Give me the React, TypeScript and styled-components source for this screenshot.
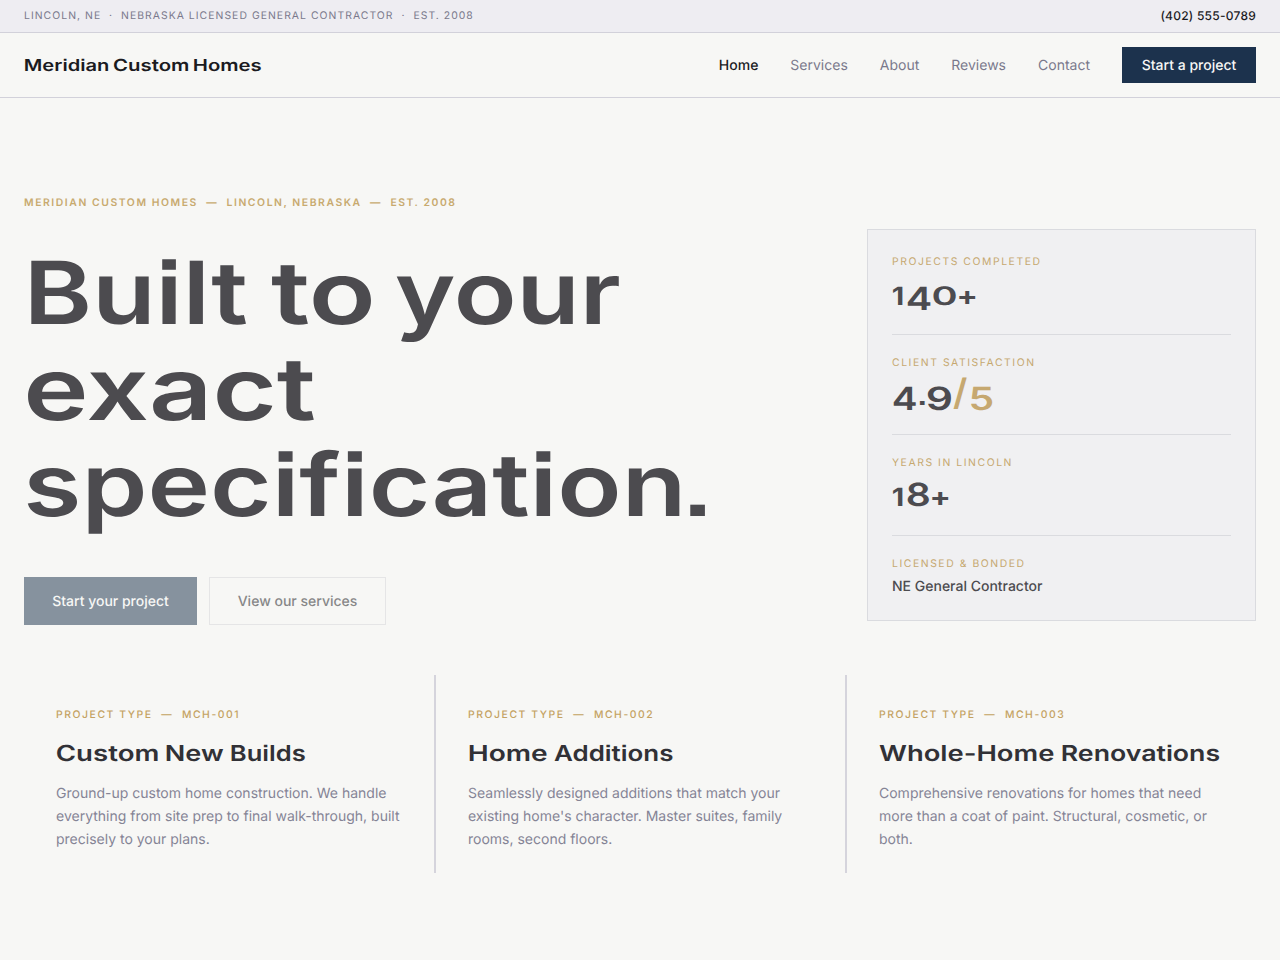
import React, { useLayoutEffect, useRef } from "react";
import styled, { createGlobalStyle } from "styled-components";

const GlobalStyle = createGlobalStyle`
  * { box-sizing: border-box; }
  body {
    margin: 0;
    min-height: 100vh;
    background: #f7f7f5;
    color: #1b1b1f;
    font-family: Inter, "Liberation Sans", sans-serif;
    text-rendering: geometricPrecision;
    overflow: hidden;
  }
  h1, h2, p { margin: 0; }
  a { color: inherit; text-decoration: none; }
`;

/* Display type: extended lettering, each word stretched to its set width. */
const WordBox = styled.span<{ $width: number; $gap: number; $size: number; $weight: number; $face: string }>`
  flex: none;
  display: inline-block;
  width: ${(p) => p.$width}px;
  margin-left: ${(p) => p.$gap}px;
  font-family: ${(p) => p.$face}, "Liberation Sans", sans-serif;
  font-size: ${(p) => p.$size}px;
  font-weight: ${(p) => p.$weight};
  font-feature-settings: "ss07" 1;
  white-space: nowrap;
`;
const WordInk = styled.span`
  display: inline-block;
  transform-origin: 0 50%;
`;
/* Last letter of a word that a punctuation mark follows closely. */
const LastLetter = styled.span<{ $trim: number }>`
  letter-spacing: -${(p) => p.$trim}px;
`;

type WordProps = {
  text: string;
  width: number;
  size: number;
  gap?: number;
  drop?: number;
  weight?: number;
  face?: string;
  trim?: number;
};

function Word({ text, width, size, gap = 0, drop = 0, weight = 600, face = "Inter", trim = 0 }: WordProps) {
  const ref = useRef<HTMLSpanElement>(null);
  useLayoutEffect(() => {
    const ctx = document.createElement("canvas").getContext("2d");
    if (!ctx || !ref.current) return;
    ctx.font = `${weight} ${size}px ${face}, "Liberation Sans", sans-serif`;
    const m = ctx.measureText(text);
    const scale = width / (m.actualBoundingBoxLeft + m.actualBoundingBoxRight);
    ref.current.style.transform = `translate(${m.actualBoundingBoxLeft * scale}px, ${drop}px) scaleX(${scale})`;
  }, [text, width, size, drop, weight, face]);
  return (
    <WordBox $width={width} $gap={gap} $size={size} $weight={weight} $face={face}>
      <WordInk ref={ref}>
        {trim ? (
          <>
            {text.slice(0, -1)}
            <LastLetter $trim={trim}>{text.slice(-1)}</LastLetter>
          </>
        ) : (
          text
        )}
      </WordInk>
    </WordBox>
  );
}

const TopBar = styled.div`
  height: 33px;
  padding: 0 24px 2px;
  display: flex;
  align-items: center;
  justify-content: space-between;
  background: #eeedf2;
  border-bottom: 1px solid #d2d1da;
`;
const TopNote = styled.span`
  font-size: 10.4px;
  letter-spacing: 1.04px;
  color: #7a798c;
  white-space: pre;
`;
const Phone = styled.a`
  font-size: 12px;
  font-weight: 500;
  letter-spacing: 0.24px;
`;

const Header = styled.header`
  height: 65px;
  padding: 0 24px;
  display: flex;
  align-items: center;
  justify-content: space-between;
  border-bottom: 1px solid #d2d1da;
`;
const Logo = styled.a`
  display: flex;
  align-items: baseline;
  padding-left: 1px;
  line-height: 24px;
`;
const Nav = styled.nav`
  display: flex;
  align-items: center;
  gap: 32px;
`;
const NavLink = styled.a<{ $active?: boolean }>`
  padding-top: 2px;
  font-size: 14px;
  line-height: 18px;
  font-weight: ${(p) => (p.$active ? 500 : 400)};
  color: ${(p) => (p.$active ? "#1b1b1f" : "#7a798c")};
`;
const NavButton = styled.a`
  width: 134px;
  height: 36px;
  padding-top: 2px;
  display: flex;
  align-items: center;
  justify-content: center;
  background: #1c324d;
  color: #f7f7f5;
  font-size: 14px;
  line-height: 18px;
  font-weight: 500;
`;

const Hero = styled.section`
  padding: 98px 24px 0;
  display: grid;
  grid-template-columns: 1fr 389px;
`;
const Eyebrow = styled.p`
  font-size: 10.4px;
  line-height: 14px;
  font-weight: 600;
  letter-spacing: 1.56px;
  color: #c8aa6f;
  white-space: pre;
`;
const Headline = styled.h1`
  margin-top: 35px;
  color: #4c4b4f;
  line-height: 96px;
`;
const HeadlineRow = styled.span<{ $inset: number }>`
  display: flex;
  align-items: baseline;
  height: 96px;
  padding-left: ${(p) => p.$inset}px;
`;
const Actions = styled.div`
  margin-top: 44px;
  display: flex;
  gap: 12px;
`;
const Action = styled.a<{ $primary?: boolean }>`
  width: ${(p) => (p.$primary ? 173 : 177)}px;
  height: 48px;
  padding-top: 2px;
  display: flex;
  align-items: center;
  justify-content: center;
  font-size: 14px;
  line-height: 18px;
  font-weight: 500;
  border: 1px solid ${(p) => (p.$primary ? "#86929e" : "#e5e5e6")};
  background: ${(p) => (p.$primary ? "#86929e" : "transparent")};
  color: ${(p) => (p.$primary ? "#f7f7f5" : "#878788")};
`;

const StatsPanel = styled.aside`
  margin-top: 33px;
  height: 392px;
  padding: 4px 24px 0;
  background: #f0f0f2;
  border: 1px solid #dadbdf;
`;
const Stat = styled.div<{ $height: number }>`
  height: ${(p) => p.$height}px;
  padding-top: 21px;
  border-bottom: 1px solid #dadbdf;
  &:last-child { border-bottom: 0; }
`;
const StatLabel = styled.p`
  font-size: 10.4px;
  line-height: 14px;
  letter-spacing: 1.56px;
  color: #c6a870;
`;
const StatValue = styled.p<{ $inset: number }>`
  display: flex;
  align-items: baseline;
  height: 40px;
  padding-left: ${(p) => p.$inset}px;
  margin-top: 5px;
  font-size: 32px;
  line-height: 40px;
  color: #4c4b4f;
`;
const Accent = styled.span`
  display: flex;
  align-items: baseline;
  color: #c6a870;
`;
const StatNote = styled.p`
  margin-top: 6px;
  font-size: 14px;
  line-height: 20px;
  font-weight: 500;
  color: #4c4b4f;
`;

const Services = styled.section`
  margin: 50px 24px 0;
  display: grid;
  grid-template-columns: 410px 411px 411px;
`;
const ServiceCard = styled.article`
  height: 198px;
  padding: 33px 32px 0;
  & + & { border-left: 2px solid #d5d4dc; }
`;
const ServiceTag = styled(Eyebrow)`
  font-weight: 500;
  color: #c4a262;
`;
const ServiceTitle = styled.h2`
  display: flex;
  align-items: baseline;
  height: 28px;
  margin-top: 18px;
  padding-left: 1px;
  line-height: 28px;
  color: #313136;
`;
const ServiceText = styled.p`
  margin-top: 14px;
  font-size: 14px;
  line-height: 23px;
  color: #858495;
  white-space: pre;
`;

const services = [
  {
    tag: "MCH-001",
    title: [
      { text: "Custom", width: 101.3 },
      { text: "New", width: 57, gap: 7.4 },
      { text: "Builds", width: 74.6, gap: 8 },
    ],
    lines: [
      "Ground-up custom home construction. We handle",
      "everything from site prep to final walk-through, built",
      "precisely to your plans.",
    ],
  },
  {
    tag: "MCH-002",
    title: [
      { text: "Home", width: 78.7 },
      { text: "Additions", width: 119.3, gap: 6.3 },
    ],
    lines: [
      "Seamlessly designed additions that match your",
      "existing home's character. Master suites, family",
      "rooms, second floors.",
    ],
  },
  {
    tag: "MCH-003",
    title: [
      { text: "Whole-Home", width: 175.3, gap: -0.8 },
      { text: "Renovations", width: 158, gap: 7.5 },
    ],
    lines: [
      "Comprehensive renovations for homes that need",
      "more than a coat of paint. Structural, cosmetic, or",
      "both.",
    ],
  },
];

export default function App() {
  return (
    <>
      <GlobalStyle />
      <TopBar>
        <TopNote>{"LINCOLN, NE \u00a0·\u00a0 NEBRASKA LICENSED GENERAL CONTRACTOR \u00a0·\u00a0 EST. 2008"}</TopNote>
        <Phone href="#">(402) 555-0789</Phone>
      </TopBar>
      <Header>
        <Logo href="#">
          <Word text="Meridian" size={16.5} width={83} />{" "}
          <Word text="Custom" size={16.5} width={75.3} gap={5} />{" "}
          <Word text="Homes" size={16.5} width={67.7} gap={5.7} />
        </Logo>
        <Nav>
          <NavLink href="#" $active>Home</NavLink>
          <NavLink href="#">Services</NavLink>
          <NavLink href="#">About</NavLink>
          <NavLink href="#">Reviews</NavLink>
          <NavLink href="#">Contact</NavLink>
          <NavButton href="#">Start a project</NavButton>
        </Nav>
      </Header>
      <main>
        <Hero>
          <div>
            <Eyebrow>{"MERIDIAN CUSTOM HOMES \u00a0—\u00a0 LINCOLN, NEBRASKA \u00a0—\u00a0 EST. 2008"}</Eyebrow>
            <Headline>
              <HeadlineRow $inset={7}>
                <Word text="Built" size={87} width={216} />{" "}
                <Word text="to" size={87} width={101} gap={24} />{" "}
                <Word text="your" size={87} width={223} gap={24} />
              </HeadlineRow>{" "}
              <HeadlineRow $inset={3}>
                <Word text="exact" size={87} width={288} />
              </HeadlineRow>{" "}
              <HeadlineRow $inset={3.4}>
                <Word text="specification" size={87} width={653} trim={7} />
                <Word text="." size={76} width={15} gap={10} weight={700} face="Liberation Sans" />
              </HeadlineRow>
            </Headline>
            <Actions>
              <Action href="#" $primary>Start your project</Action>
              <Action href="#">View our services</Action>
            </Actions>
          </div>
          <StatsPanel>
            <Stat $height={101}>
              <StatLabel>PROJECTS COMPLETED</StatLabel>
              <StatValue $inset={0.6}>
                <Word text="1" size={25} width={10.4} weight={700} />
                <Word text="4" size={32} width={23.6} gap={3.7} drop={5} />
                <Word text="0" size={25.5} width={23.3} gap={2.4} />
                <Word text="+" size={26} width={17} gap={3.3} drop={-0.5} weight={700} />
              </StatValue>
            </Stat>
            <Stat $height={100}>
              <StatLabel>CLIENT SATISFACTION</StatLabel>
              <StatValue $inset={0.5}>
                <Word text="4" size={32} width={23} drop={2} />
                <Word text="." size={27} width={6} gap={3} drop={-3} weight={700} face="Liberation Sans" />
                <Word text="9" size={32} width={24} gap={2.7} drop={2} />
                <Accent>
                  <Word text="/" size={36} width={14.7} gap={1.6} drop={-3} />
                  <Word text="5" size={32} width={21.7} gap={3.3} drop={2} />
                </Accent>
              </StatValue>
            </Stat>
            <Stat $height={101}>
              <StatLabel>YEARS IN LINCOLN</StatLabel>
              <StatValue $inset={0.6}>
                <Word text="1" size={25} width={10.4} weight={700} />
                <Word text="8" size={32} width={22} gap={4} />
                <Word text="+" size={26} width={17} gap={2.7} drop={-0.5} weight={700} />
              </StatValue>
            </Stat>
            <Stat $height={84}>
              <StatLabel>LICENSED &amp; BONDED</StatLabel>
              <StatNote>NE General Contractor</StatNote>
            </Stat>
          </StatsPanel>
        </Hero>
        <Services>
          {services.map((s) => (
            <ServiceCard key={s.tag}>
              <ServiceTag>{`PROJECT TYPE \u00a0—\u00a0 ${s.tag}`}</ServiceTag>
              <ServiceTitle>
                {s.title.map((w) => (
                  <React.Fragment key={w.text}>
                    <Word size={22} {...w} />{" "}
                  </React.Fragment>
                ))}
              </ServiceTitle>
              <ServiceText>{s.lines.join("\n")}</ServiceText>
            </ServiceCard>
          ))}
        </Services>
      </main>
    </>
  );
}
